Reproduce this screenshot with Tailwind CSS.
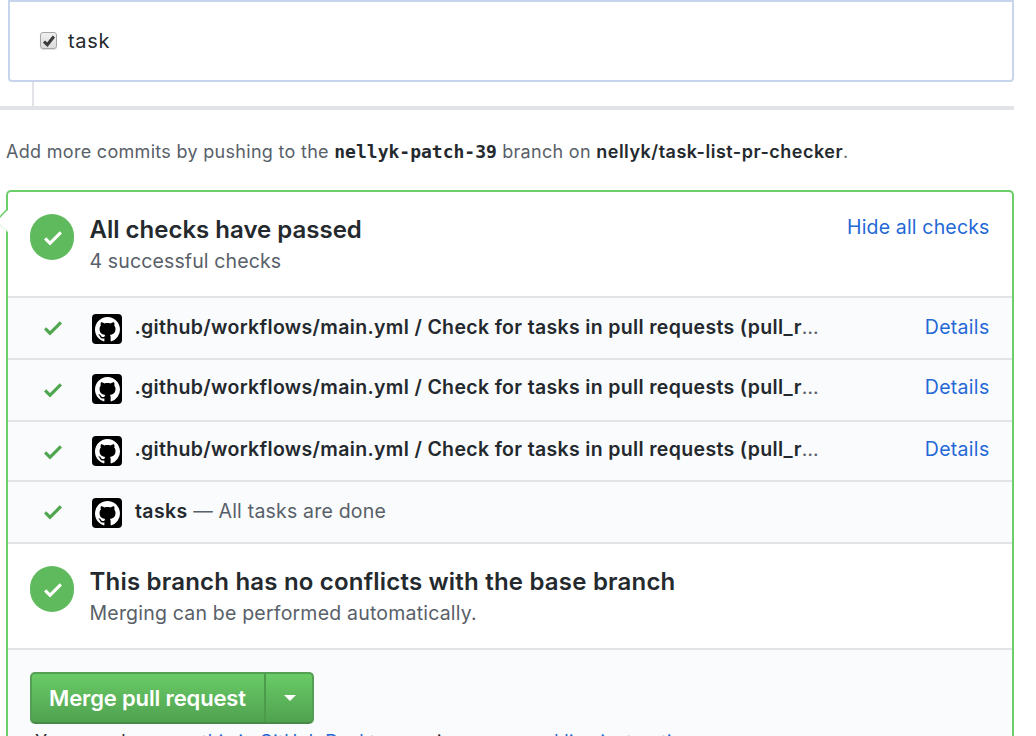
<!DOCTYPE html>
<html lang="en">
<head>
<meta charset="utf-8">
<title>Pull request checks</title>
<script src="https://cdn.jsdelivr.net/npm/@tailwindcss/browser@4"></script>
</head>
<body class="h-[736px] overflow-hidden bg-white font-['Inter',sans-serif] text-[#24292e]">
<svg class="hidden">
  <symbol id="check" viewBox="0 0 12 16"><path d="M12 5l-8 8-4-4 1.5-1.5L4 10l6.5-6.5z"/></symbol>
  <symbol id="mark" viewBox="0 0 16 16"><path fill-rule="evenodd" d="M8 0C3.58 0 0 3.58 0 8c0 3.54 2.29 6.53 5.47 7.59.4.07.55-.17.55-.38 0-.19-.01-.82-.01-1.49-2.01.37-2.53-.49-2.69-.94-.09-.23-.48-.94-.82-1.13-.28-.15-.68-.52-.01-.53.63-.01 1.08.58 1.23.82.72 1.21 1.87.87 2.33.66.07-.52.28-.87.51-1.07-1.78-.2-3.64-.89-3.64-3.95 0-.87.31-1.59.82-2.15-.08-.2-.36-1.02.08-2.12 0 0 .67-.21 2.2.82.64-.18 1.32-.27 2-.27s1.36.09 2 .27c1.53-1.04 2.2-.82 2.2-.82.44 1.1.16 1.92.08 2.12.51.56.82 1.27.82 2.15 0 3.07-1.87 3.75-3.65 3.95.29.25.54.73.54 1.48 0 1.07-.01 1.93-.01 2.2 0 .21.15.46.55.38A8.01 8.01 0 0 0 16 8c0-4.42-3.58-8-8-8z"/></symbol>
</svg>
<main class="w-[1014px] whitespace-nowrap">
  <section class="ml-2 flex h-[82px] items-center rounded-b border-2 border-[#c6d4ec] pl-[30px]">
    <span class="mt-[-1px] flex size-[17px] items-center justify-center rounded-[3px] border border-[#a6a6a6] bg-linear-to-b from-[#f0f0f0] to-[#dcdcdc] shadow-[0_1px_1px_#00000022]">
      <svg class="size-[12px] shrink-0" viewBox="0 0 11 11" fill="none" stroke="#3a3a3a" stroke-width="2.8"><path d="M.9 6L4 8.900 10 1.400"/></svg>
    </span>
    <span class="ml-[11px] mt-[-1px] text-[20px] leading-[30px] tracking-[0.7px]">task</span>
  </section>
  <div class="ml-8 h-6 w-0.5 bg-[#e1e3e8]"></div>
  <div class="h-1 bg-[#e1e3e6]"></div>
  <p class="ml-1.5 h-20 pt-[28px] text-[18px] leading-[28px] tracking-[0.3px] text-[#586069]">Add more commits by pushing to the <b class="font-['DejaVu_Sans_Mono',monospace] font-bold tracking-normal text-[#24292e]">nellyk-patch-39</b> branch on <b class="font-semibold tracking-[0.5px] text-[#24292e]">nellyk/task-list-pr-checker</b>.</p>

  <section class="relative ml-1.5 h-[560px] rounded-t-[5px] border-2 border-b-0 border-[#6cce68]">
    <svg class="absolute -left-2 top-[14px] h-[30px] w-[9px]" viewBox="0 0 9 30"><path d="M0 10.500L6 4.500H9V26H8L0 18z" fill="#fff"/><path d="M-1 12L7 3.500" stroke="#6cce68" stroke-width="1.500"/><path d="M-1 17.500L7.500 26" stroke="#c5ebc3" stroke-width=".8"/></svg>
    <header class="flex h-[104px] pl-[22px] pr-[22.500px] pt-[22px]">
      <span class="flex h-[46px] w-11 items-center justify-center rounded-[22px] bg-[#5fba5e] text-white"><svg class="ml-0.5 mt-0.5 h-6 w-[18px] fill-current"><use href="#check"/></svg></span>
      <div class="ml-[15.5px] flex-1">
        <h2 class="text-[24px] font-semibold leading-[32px]">All checks have passed</h2>
        <p class="text-[19.5px] leading-[31px] tracking-[0.13px] text-[#586069]">4 successful checks</p>
      </div>
      <a class="text-[19.5px] leading-[27px] tracking-[0.16px] text-[#2468d6]">Hide all checks</a>
    </header>
    <div class="flex h-[62px] items-start border-t-2 border-[#e1e3e6] bg-[#fafbfd] pl-9 pr-[22.5px] text-[19.5px]">
      <svg class="mt-[18px] h-6 w-[18px] fill-[#4fa64f]"><use href="#check"/></svg>
      <span class="ml-[30px] mt-4 flex size-[30px] items-center justify-center rounded-[4px] bg-black"><svg class="size-[25px] fill-white"><use href="#mark"/></svg></span>
      <p class="ml-[12.5px] mt-[15px] flex-1 leading-[29px] text-[#586069]"><b class="font-semibold tracking-[0.34px] text-[#24292e]">.github/workflows/main.yml / Check for tasks in pull requests (pull_r</b>…</p>
      <a class="mt-[15px] leading-[29px] tracking-[0.3px] text-[#2468d6]">Details</a>
    </div>
    <div class="flex h-[62px] items-start border-t-2 border-[#e1e3e6] bg-[#fafbfd] pl-9 pr-[22.5px] text-[19.5px]">
      <svg class="mt-[18px] h-6 w-[18px] fill-[#4fa64f]"><use href="#check"/></svg>
      <span class="ml-[30px] mt-3.5 flex size-[30px] items-center justify-center rounded-[4px] bg-black"><svg class="size-[25px] fill-white"><use href="#mark"/></svg></span>
      <p class="ml-[12.5px] mt-[13px] flex-1 leading-[29px] text-[#586069]"><b class="font-semibold tracking-[0.34px] text-[#24292e]">.github/workflows/main.yml / Check for tasks in pull requests (pull_r</b>…</p>
      <a class="mt-[13px] leading-[29px] tracking-[0.3px] text-[#2468d6]">Details</a>
    </div>
    <div class="flex h-[60px] items-start border-t-2 border-[#e1e3e6] bg-[#fafbfd] pl-9 pr-[22.5px] text-[19.5px]">
      <svg class="mt-[18px] h-6 w-[18px] fill-[#4fa64f]"><use href="#check"/></svg>
      <span class="ml-[30px] mt-3.5 flex size-[30px] items-center justify-center rounded-[4px] bg-black"><svg class="size-[25px] fill-white"><use href="#mark"/></svg></span>
      <p class="ml-[12.5px] mt-[13px] flex-1 leading-[29px] text-[#586069]"><b class="font-semibold tracking-[0.34px] text-[#24292e]">.github/workflows/main.yml / Check for tasks in pull requests (pull_r</b>…</p>
      <a class="mt-[13px] leading-[29px] tracking-[0.3px] text-[#2468d6]">Details</a>
    </div>
    <div class="flex h-[62px] items-start border-t-2 border-[#e1e3e6] bg-[#fafbfd] pl-9 pr-[22.5px] text-[19.5px]">
      <svg class="mt-[18px] h-6 w-[18px] fill-[#4fa64f]"><use href="#check"/></svg>
      <span class="ml-[30px] mt-4 flex size-[30px] items-center justify-center rounded-[4px] bg-black"><svg class="size-[25px] fill-white"><use href="#mark"/></svg></span>
      <p class="ml-[13px] mt-[15px] flex-1 leading-[29px] tracking-[0.2px] text-[#586069]"><b class="font-semibold tracking-[0.35px] text-[#24292e]">tasks</b> — All tasks are done</p>
    </div>
    <div class="flex h-[106px] border-t-2 border-[#e1e3e6] pl-[22px] pt-[22px]">
      <span class="flex h-[46px] w-11 items-center justify-center rounded-[22px] bg-[#5fba5e] text-white"><svg class="ml-0.5 mt-0.5 h-6 w-[18px] fill-current"><use href="#check"/></svg></span>
      <div class="ml-[15.5px]">
        <h2 class="text-[24px] font-semibold leading-[32px] tracking-[0.2px]">This branch has no conflicts with the base branch</h2>
        <p class="text-[19.5px] leading-[31px] tracking-[0.2px] text-[#586069]">Merging can be performed automatically.</p>
      </div>
    </div>
    <footer class="h-[88px] border-t-2 border-[#e1e3e6] bg-[#fafbfd] pl-[22px] pt-[22px]">
      <div class="flex h-[52px] w-[284px] rounded-[5px] border-2 border-[#559f54] border-b-[#488b48] bg-linear-to-b from-[#69cb66] to-[#50a250] text-white">
        <span class="w-[234px] border-r-2 border-[#4b9b4b] pl-[17px] text-[22px] font-semibold leading-[48px] tracking-[-0.14px]">Merge pull request</span>
        <span class="flex flex-1 items-center justify-center pl-0.5"><svg class="h-[6px] w-[12px] fill-white" viewBox="0 0 12 6"><path d="M0 0H12L6 6z"/></svg></span>
      </div>
      <p class="ml-[5px] mt-[5px] text-[18px] leading-[26px] tracking-[0.29px]">You can also <span class="text-[#2468d6]">open this in GitHub Desktop</span> or view <span class="text-[#2468d6]">command line instructions</span>.</p>
    </footer>
  </section>
</main>
</body>
</html>
